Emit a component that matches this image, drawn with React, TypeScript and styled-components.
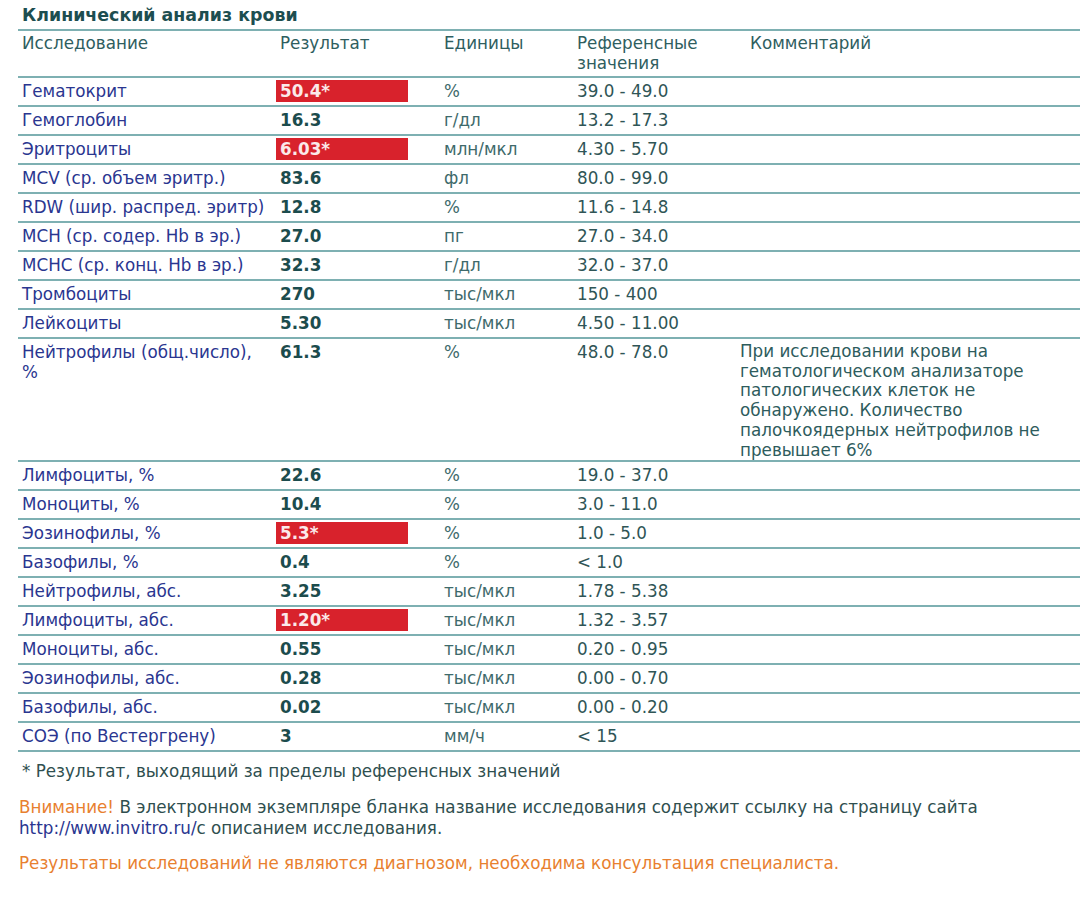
import React from "react";
import styled, { createGlobalStyle } from "styled-components";

const Global = createGlobalStyle`
  html, body { margin: 0; padding: 0; background: #ffffff; }
  body { font-family: "DejaVu Sans", Verdana, sans-serif; font-size: 16.75px; color: #2e5858; }
`;

const Page = styled.div`
  width: 1080px;
  height: 924px;
  overflow: hidden;
  padding-left: 18px;
  box-sizing: border-box;
`;

const Title = styled.h1`
  margin: 0 0 4px 4px;
  padding-top: 5px;
  font-size: 17.4px;
  line-height: 20px;
  font-weight: bold;
  color: #1d4e50;
`;

const Table = styled.div`
  border-top: 2px solid #7eb0b2;
  width: 1062px;
`;

const cols = "258px 164px 133px 167px 1fr";

const HeaderRow = styled.div`
  display: grid;
  grid-template-columns: ${cols};
  padding: 2px 0 3px;
  border-bottom: 2px solid #7eb0b2;
  line-height: 20px;
  color: #2f5e5f;
`;

const Row = styled.div`
  display: grid;
  grid-template-columns: ${cols};
  align-items: start;
  min-height: 29px;
  box-sizing: border-box;
  padding-top: 3px;
  border-bottom: 2px solid #7eb0b2;
  line-height: 20px;
`;

const Cell = styled.div<{ $indent?: number }>`
  padding-left: ${(p) => p.$indent ?? 4}px;
`;

const Name = styled(Cell)`
  color: #2a3690;
`;

const Result = styled.div<{ $flag?: boolean }>`
  justify-self: start;
  width: 132px;
  box-sizing: border-box;
  padding-left: 4px;
  margin-top: -1px;
  height: 22px;
  line-height: 22px;
  font-weight: bold;
  color: ${(p) => (p.$flag ? "#fbe9ea" : "#1c4c4d")};
  background: ${(p) => (p.$flag ? "#d8222c" : "transparent")};
`;

const Units = styled(Cell)`
  color: #3e6a6b;
`;

const Ref = styled(Cell)`
  color: #2f5556;
`;

const Comment = styled.div`
  color: #2e5c5d;
  padding-right: 20px;
  line-height: 19.7px;
`;

const Footnote = styled.p`
  margin: 9px 0 0 4px;
  line-height: 20px;
  color: #2f4f4f;
`;

const Notice = styled.p`
  margin: 16px 0 0 1px;
  line-height: 21px;
  color: #2f4f4f;
`;

const Orange = styled.span`
  color: #e8802f;
`;

const Link = styled.span`
  color: #2a3690;
`;

const Warning = styled.p`
  margin: 14px 0 0 1px;
  line-height: 21px;
  color: #e8802f;
`;

type R = { name: React.ReactNode; value: string; flag?: boolean; unit: string; ref: string; comment?: React.ReactNode };

const rows: R[] = [
  { name: "Гематокрит", value: "50.4*", flag: true, unit: "%", ref: "39.0 - 49.0" },
  { name: "Гемоглобин", value: "16.3", unit: "г/дл", ref: "13.2 - 17.3" },
  { name: "Эритроциты", value: "6.03*", flag: true, unit: "млн/мкл", ref: "4.30 - 5.70" },
  { name: "MCV (ср. объем эритр.)", value: "83.6", unit: "фл", ref: "80.0 - 99.0" },
  { name: "RDW (шир. распред. эритр)", value: "12.8", unit: "%", ref: "11.6 - 14.8" },
  { name: "MCH (ср. содер. Hb в эр.)", value: "27.0", unit: "пг", ref: "27.0 - 34.0" },
  { name: "MCHC (ср. конц. Hb в эр.)", value: "32.3", unit: "г/дл", ref: "32.0 - 37.0" },
  { name: "Тромбоциты", value: "270", unit: "тыс/мкл", ref: "150 - 400" },
  { name: "Лейкоциты", value: "5.30", unit: "тыс/мкл", ref: "4.50 - 11.00" },
  {
    name: (
      <>
        Нейтрофилы (общ.число),
        <br />%
      </>
    ),
    value: "61.3",
    unit: "%",
    ref: "48.0 - 78.0",
    comment: (
      <>
        При исследовании крови на
        <br />
        гематологическом анализаторе
        <br />
        патологических клеток не
        <br />
        обнаружено. Количество
        <br />
        палочкоядерных нейтрофилов не
        <br />
        превышает 6%
      </>
    ),
  },
  { name: "Лимфоциты, %", value: "22.6", unit: "%", ref: "19.0 - 37.0" },
  { name: "Моноциты, %", value: "10.4", unit: "%", ref: "3.0 - 11.0" },
  { name: "Эозинофилы, %", value: "5.3*", flag: true, unit: "%", ref: "1.0 - 5.0" },
  { name: "Базофилы, %", value: "0.4", unit: "%", ref: "< 1.0" },
  { name: "Нейтрофилы, абс.", value: "3.25", unit: "тыс/мкл", ref: "1.78 - 5.38" },
  { name: "Лимфоциты, абс.", value: "1.20*", flag: true, unit: "тыс/мкл", ref: "1.32 - 3.57" },
  { name: "Моноциты, абс.", value: "0.55", unit: "тыс/мкл", ref: "0.20 - 0.95" },
  { name: "Эозинофилы, абс.", value: "0.28", unit: "тыс/мкл", ref: "0.00 - 0.70" },
  { name: "Базофилы, абс.", value: "0.02", unit: "тыс/мкл", ref: "0.00 - 0.20" },
  { name: "СОЭ (по Вестергрену)", value: "3", unit: "мм/ч", ref: "< 15" },
];

export default function App() {
  return (
    <>
      <Global />
      <Page>
        <Title>Клинический анализ крови</Title>
        <Table>
          <HeaderRow>
            <Cell>Исследование</Cell>
            <Cell>Результат</Cell>
            <Cell>Единицы</Cell>
            <Cell>
              Референсные
              <br />
              значения
            </Cell>
            <Cell $indent={10}>Комментарий</Cell>
          </HeaderRow>
          {rows.map((r, i) => (
            <Row key={i}>
              <Name>{r.name}</Name>
              <Result $flag={r.flag}>{r.value}</Result>
              <Units>{r.unit}</Units>
              <Ref>{r.ref}</Ref>
              <Comment>{r.comment}</Comment>
            </Row>
          ))}
        </Table>
        <Footnote>* Результат, выходящий за пределы референсных значений</Footnote>
        <Notice>
          <Orange>Внимание!</Orange> В электронном экземпляре бланка название исследования содержит ссылку на страницу сайта
          <br />
          <Link>http://www.invitro.ru/</Link>с описанием исследования.
        </Notice>
        <Warning>Результаты исследований не являются диагнозом, необходима консультация специалиста.</Warning>
      </Page>
    </>
  );
}
